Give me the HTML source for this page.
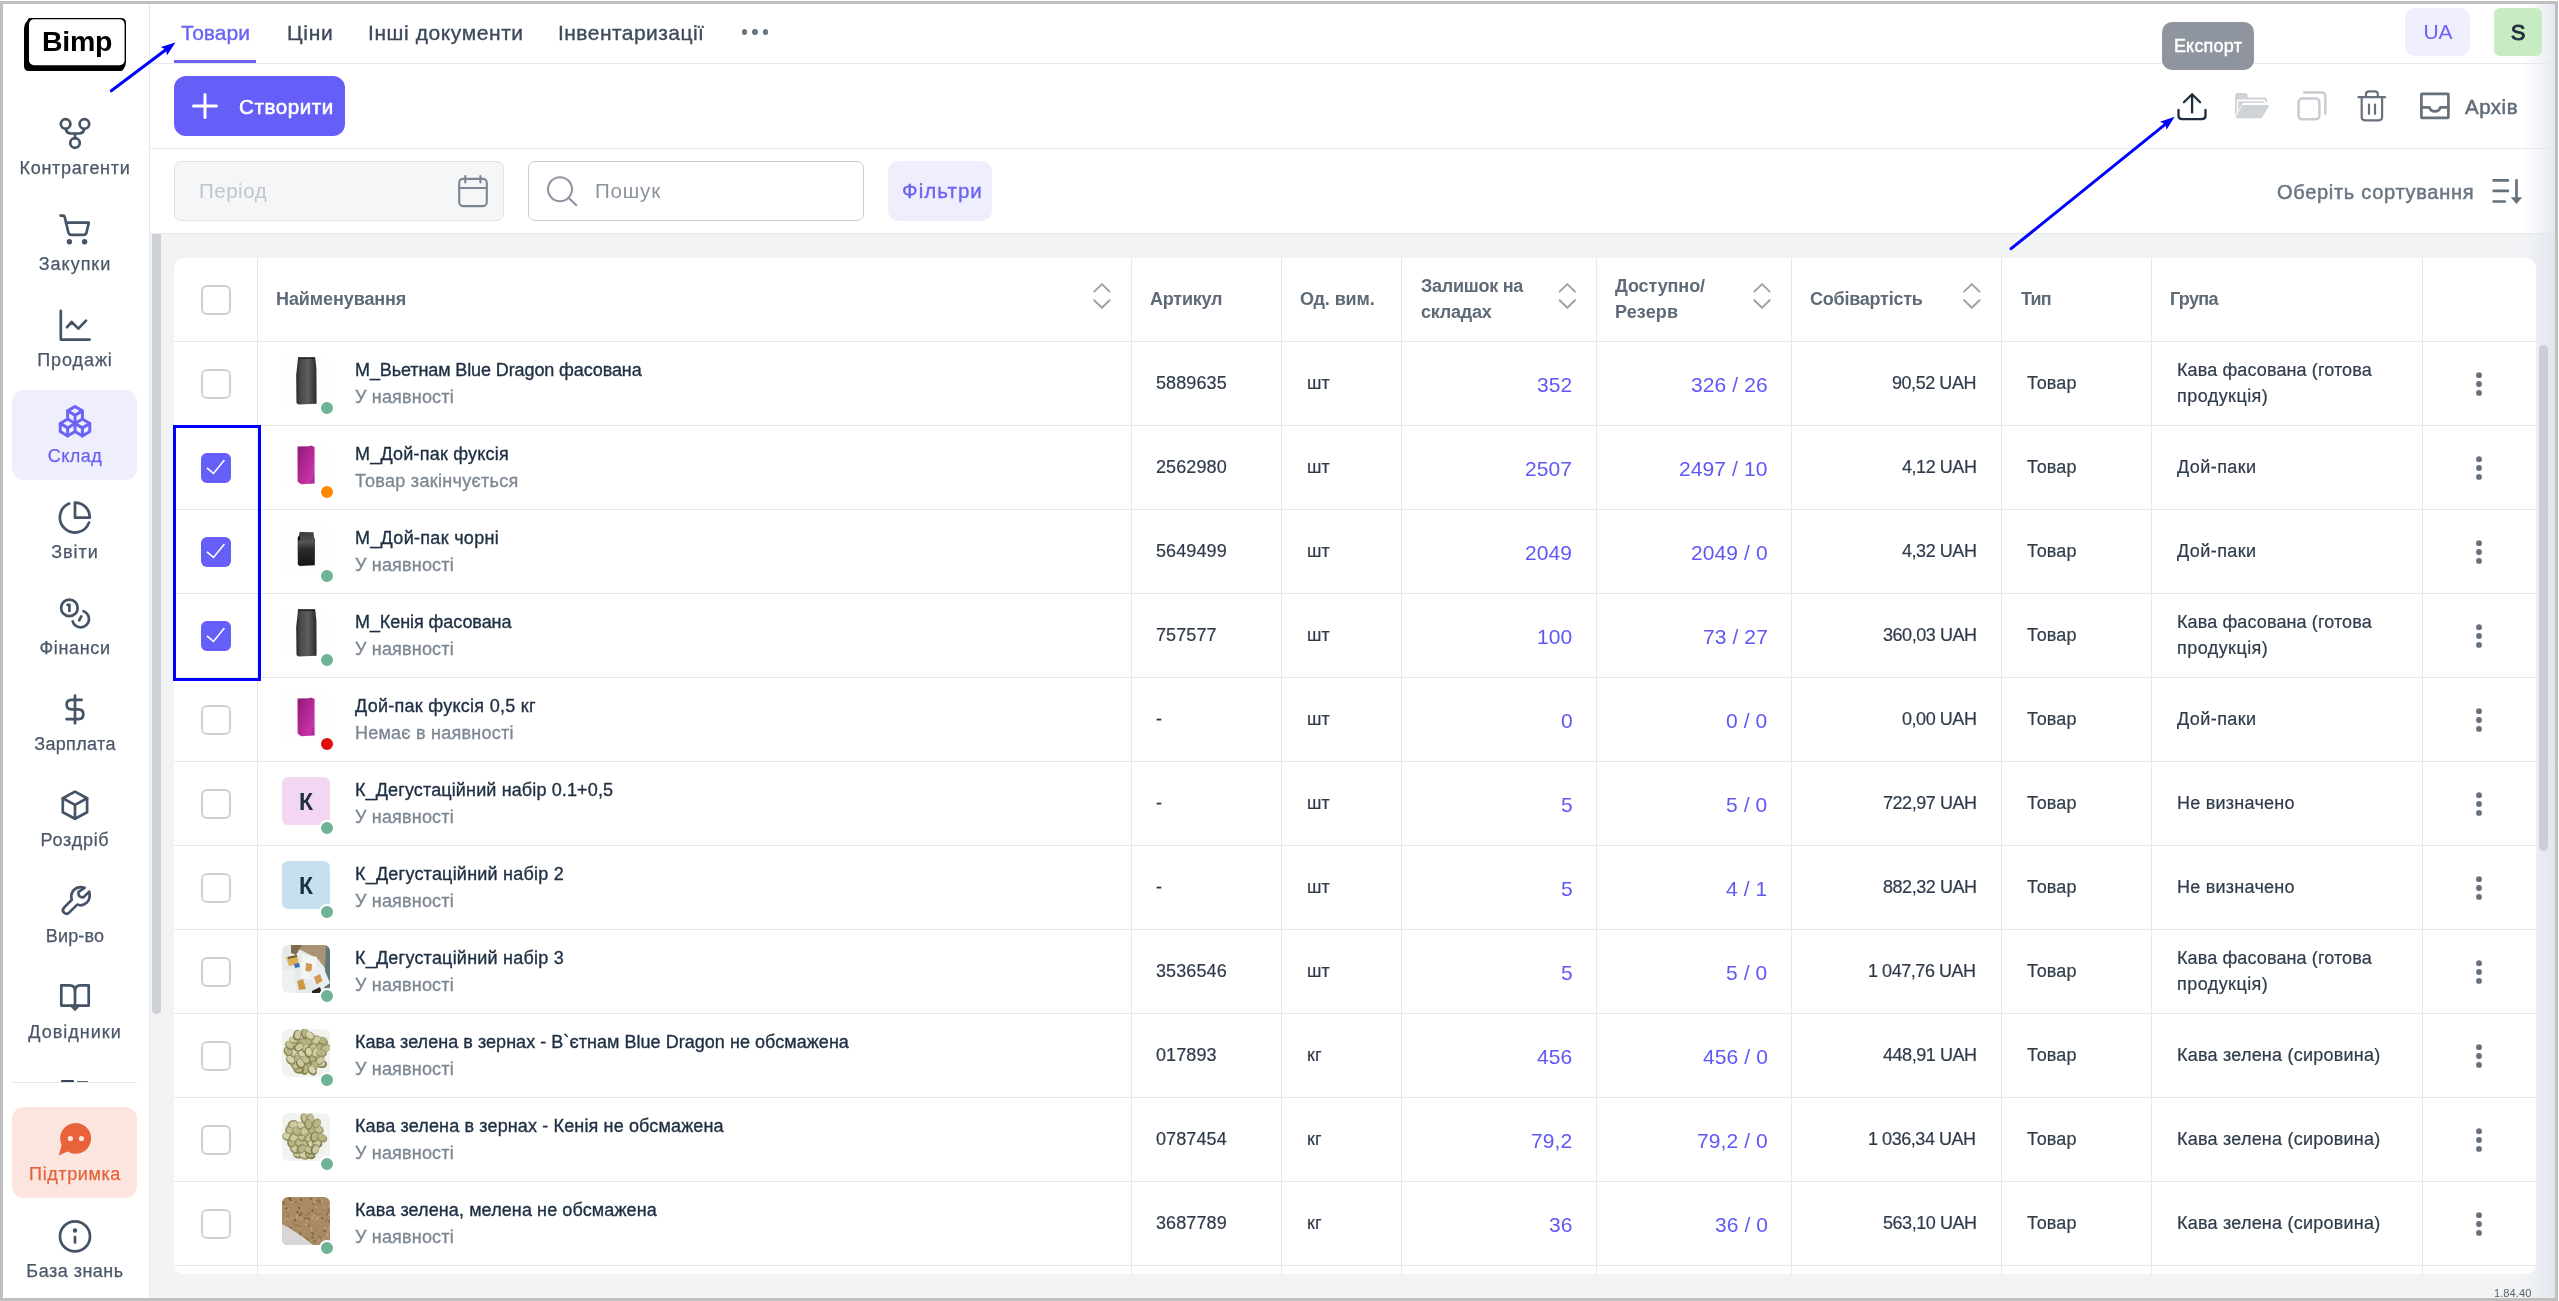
<!DOCTYPE html><html><head><meta charset="utf-8"><title>Bimp</title><style>
html,body{margin:0;padding:0;}
body{width:2559px;height:1301px;overflow:hidden;background:#fff;font-family:"Liberation Sans",sans-serif;position:relative;}
.t{position:absolute;line-height:1;white-space:nowrap;will-change:transform;}
.b{position:absolute;box-sizing:border-box;}
svg{position:absolute;overflow:visible;}
.ic{fill:none;stroke-linecap:round;stroke-linejoin:round;}
</style></head><body>
<div class="b" style="left:150px;top:234px;width:2405px;height:1064px;background:#f2f3f5"></div>
<div class="b" style="left:2522px;top:4px;width:33px;height:1294px;background:linear-gradient(90deg,rgba(220,225,236,0) 0%,rgba(220,225,236,0.25) 40%,rgba(220,225,236,0.75) 100%)"></div>
<div class="b" style="left:150px;top:63px;width:2405px;height:1px;background:#e6e8eb"></div>
<div class="b" style="left:150px;top:148px;width:2405px;height:1px;background:#e6e8eb"></div>
<div class="b" style="left:150px;top:233px;width:2405px;height:1px;background:#e6e8eb"></div>
<div class="b" style="left:149px;top:4px;width:1px;height:1294px;background:#e6e8eb"></div>
<div class="b" style="left:152px;top:234px;width:9px;height:780px;background:#cdd0d5;border-radius:0 0 4.5px 4.5px"></div>
<svg style="left:0;top:0" width="200" height="100" viewBox="0 0 200 100">
<path d="M29 18 H121 Q126 18 126 23 V62 Q126 66 123 70 L121 71 H29 Q24 71 24 66 V28 Q24 24 27 21 Z" fill="#000"/>
<rect x="29" y="19.2" width="95.6" height="46" rx="5" fill="#fff"/>
</svg>
<div class="t " style="left:41.5px;top:26.87px;font-size:28.5px;color:#000;font-weight:700;letter-spacing:-0.3px;">Bimp</div>
<div class="b" style="left:12px;top:390px;width:125px;height:90px;background:#efeefd;border-radius:12px"></div>
<div class="b" style="left:12px;top:1107px;width:125px;height:91px;background:#fde5df;border-radius:12px"></div>
<div class="b" style="left:61px;top:1080px;width:12.6px;height:2px;background:#34445a;border-radius:1px 1px 0 0"></div>
<div class="b" style="left:77px;top:1081px;width:11.4px;height:1px;background:#5a6778"></div>
<div class="b" style="left:12px;top:1082px;width:125px;height:1px;background:#e3e5e9"></div>
<div class="t " style="left:-225.14px;width:600px;text-align:center;top:158.76px;font-size:18px;color:#4b5768;font-weight:400;letter-spacing:0.720px;-webkit-text-stroke:0.25px #4b5768;">Контрагенти</div>
<div class="t " style="left:-225.01px;width:600px;text-align:center;top:254.76px;font-size:18px;color:#4b5768;font-weight:400;letter-spacing:0.983px;-webkit-text-stroke:0.25px #4b5768;">Закупки</div>
<div class="t " style="left:-225.04px;width:600px;text-align:center;top:350.76px;font-size:18px;color:#4b5768;font-weight:400;letter-spacing:0.917px;-webkit-text-stroke:0.25px #4b5768;">Продажі</div>
<div class="t " style="left:-225.26px;width:600px;text-align:center;top:446.76px;font-size:18px;color:#6a63f3;font-weight:400;letter-spacing:0.475px;-webkit-text-stroke:0.25px #6a63f3;">Склад</div>
<div class="t " style="left:-225.03px;width:600px;text-align:center;top:542.76px;font-size:18px;color:#4b5768;font-weight:400;letter-spacing:0.950px;-webkit-text-stroke:0.25px #4b5768;">Звіти</div>
<div class="t " style="left:-225.18px;width:600px;text-align:center;top:638.76px;font-size:18px;color:#4b5768;font-weight:400;letter-spacing:0.650px;-webkit-text-stroke:0.25px #4b5768;">Фінанси</div>
<div class="t " style="left:-225.32px;width:600px;text-align:center;top:734.76px;font-size:18px;color:#4b5768;font-weight:400;letter-spacing:0.357px;-webkit-text-stroke:0.25px #4b5768;">Зарплата</div>
<div class="t " style="left:-225.13px;width:600px;text-align:center;top:830.76px;font-size:18px;color:#4b5768;font-weight:400;letter-spacing:0.733px;-webkit-text-stroke:0.25px #4b5768;">Роздріб</div>
<div class="t " style="left:-225.41px;width:600px;text-align:center;top:926.76px;font-size:18px;color:#4b5768;font-weight:400;letter-spacing:0.180px;-webkit-text-stroke:0.25px #4b5768;">Вир-во</div>
<div class="t " style="left:-224.99px;width:600px;text-align:center;top:1022.76px;font-size:18px;color:#4b5768;font-weight:400;letter-spacing:1.012px;-webkit-text-stroke:0.25px #4b5768;">Довідники</div>
<div class="t " style="left:-225.20px;width:600px;text-align:center;top:1164.76px;font-size:18px;color:#e4623a;font-weight:400;letter-spacing:0.600px;-webkit-text-stroke:0.25px #e4623a;">Підтримка</div>
<div class="t " style="left:-225.26px;width:600px;text-align:center;top:1261.76px;font-size:18px;color:#4b5768;font-weight:400;letter-spacing:0.489px;-webkit-text-stroke:0.25px #4b5768;">База знань</div>
<svg style="left:0;top:0" width="150" height="1301" viewBox="0 0 150 1301">
<g class="ic" stroke="#455366" stroke-width="2.7">
 <!-- git fork -->
 <circle cx="65.6" cy="124" r="4.8"/><circle cx="84.4" cy="124" r="4.8"/><circle cx="75" cy="143" r="4.8"/>
 <path d="M65.8 128.8 Q66.5 133.5 71 133.5 H79 Q83.5 133.5 84.2 128.8 M75 133.5 V138.2"/>
 <!-- cart -->
 <path d="M60.6 215.6 H63 Q64.4 215.6 64.7 217 L68.4 232.5 Q69 234.8 71.5 234.8 H83.5 Q86 234.8 86.5 232.5 L88.8 222.7 H65.8"/>
 <circle cx="69.4" cy="241.7" r="1.9" fill="#455366" stroke-width="1.6"/><circle cx="84.6" cy="241.7" r="1.9" fill="#455366" stroke-width="1.6"/>
 <!-- chart line -->
 <path d="M60.8 310.8 V339.6 H89.6"/>
 <path d="M67 327.2 L71.7 322 L78.3 328.6 L86 320.6"/>
 <!-- Звіти pie -->
 <path d="M69.2 503.6 A15 15 0 1 0 89 522.6"/>
 <path d="M75 502.6 V517.7 H89.8 A14.8 14.8 0 0 0 75 502.6 Z"/>
 <!-- coins -->
 <circle cx="69.4" cy="607.9" r="8.3"/>
 <path d="M67.6 604.9 H69.4 V611"/>
 <path d="M83.5 611.2 A8.3 8.3 0 1 1 72.7 621.4"/>
 <path d="M81.3 616.4 L79.2 620.3"/>
 <!-- dollar -->
 <path d="M75 695.6 V723.3"/>
 <path d="M81.7 699.8 H71.5 Q66.6 699.8 66.6 704.6 Q66.6 709.4 71.5 709.4 H78.5 Q83.3 709.4 83.3 714.3 Q83.3 719.2 78.5 719.2 H66.6"/>
 <!-- box -->
 <path d="M75 791.6 L87.1 798.3 V812.3 L75 818.8 L62.8 812.3 V798.3 Z"/>
 <path d="M62.8 798.3 L75 804.9 L87.1 798.3 M75 804.9 V818.6"/>
 <!-- wrench -->
 <path d="M84.6 887.8 Q78 885.6 73.8 890 Q70 894.2 71.8 899.8 L64 907.6 Q61.6 910.5 64.2 912.8 Q66.8 915 69.4 912.4 L77.2 904.6 Q82.6 906.6 86.8 902.6 Q91 898.4 89.2 891.6 L83.4 897.4 Q80.8 897.6 79.2 896 Q77.8 894.2 78.6 891.8 Z"/>
 <!-- book -->
 <path d="M75 1005.6 H61.3 V985.3 H69.6 Q75 985.3 75 990.6 V1005.6"/>
 <path d="M75 990.6 Q75 985.3 80.3 985.3 H88.7 V1005.6 H75"/>
 <path d="M71.6 1005.8 L75 1009.4 L78.4 1005.8" stroke-linejoin="miter"/>
 <!-- info -->
 <circle cx="75" cy="1236.4" r="15"/>
 <path d="M75 1237 V1242.5"/>
 <circle cx="75" cy="1230.5" r="0.9" fill="#455366"/>
</g>
<g class="ic" stroke="#6a63f3" stroke-width="2" transform="translate(57.3 403.5) scale(1.477)">
 <path d="M7 16.5l-5 -3l5 -3l5 3v5.5l-5 3z"/><path d="M2 13.5v5.5l5 3"/><path d="M7 16.545l5 -3.03"/>
 <path d="M17 16.5l-5 -3l5 -3l5 3v5.5l-5 3z"/><path d="M12 19l5 3"/><path d="M17 16.5l5 -3"/>
 <path d="M12 13.5v-5.5l-5 -3l5 -3l5 3v5.5"/><path d="M7 5.03v5.455"/><path d="M12 8l5 -3"/>
</g>
<g fill="#e8633b">
 <path d="M76 1123 A15.4 15.4 0 1 1 67.5 1151.4 L58.7 1155.4 L61.6 1145 A15.4 15.4 0 0 1 76 1123 Z"/>
</g>
<circle cx="70.4" cy="1138.5" r="2.6" fill="#fde5df"/><circle cx="81.5" cy="1138.5" r="2.6" fill="#fde5df"/>
</svg>
<div class="t " style="left:181px;top:21.52px;font-size:21px;color:#6a63f3;font-weight:400;letter-spacing:0.000px;-webkit-text-stroke:0.35px #6a63f3;">Товари</div>
<div class="t " style="left:286.8px;top:21.52px;font-size:21px;color:#3d4a5b;font-weight:400;letter-spacing:0.733px;-webkit-text-stroke:0.35px #3d4a5b;">Ціни</div>
<div class="t " style="left:368.4px;top:21.52px;font-size:21px;color:#3d4a5b;font-weight:400;letter-spacing:0.585px;-webkit-text-stroke:0.35px #3d4a5b;">Інші документи</div>
<div class="t " style="left:557.7px;top:21.52px;font-size:21px;color:#3d4a5b;font-weight:400;letter-spacing:0.462px;-webkit-text-stroke:0.35px #3d4a5b;">Інвентаризації</div>
<div class="b" style="left:174px;top:60px;width:82px;height:3px;background:#6a63f3"></div>
<div class="b" style="left:741.6px;top:28.9px;width:5.8px;height:5.8px;border-radius:50%;background:#6b7582"></div>
<div class="b" style="left:752.1px;top:28.9px;width:5.8px;height:5.8px;border-radius:50%;background:#6b7582"></div>
<div class="b" style="left:762.6px;top:28.9px;width:5.8px;height:5.8px;border-radius:50%;background:#6b7582"></div>
<div class="b" style="left:2405px;top:8px;width:65px;height:48px;background:#efeefd;border-radius:10px"></div>
<div class="t " style="left:2137.50px;width:600px;text-align:center;top:21.02px;font-size:21px;color:#6a63f3;font-weight:400;">UA</div>
<div class="b" style="left:2494px;top:8px;width:48px;height:48px;background:#c8ecc1;border-radius:6px"></div>
<div class="t " style="left:2218.00px;width:600px;text-align:center;top:22.18px;font-size:22px;color:#1e2d3f;font-weight:400;-webkit-text-stroke:0.9px #1e2d3f;">S</div>
<div class="b" style="left:174px;top:76px;width:171px;height:60px;background:#655ef7;border-radius:12px"></div>
<div class="t " style="left:238.8px;top:96.65px;font-size:20.5px;color:#fff;font-weight:400;letter-spacing:0.600px;-webkit-text-stroke:0.6px #fff;">Створити</div>
<svg style="left:0;top:0" width="400" height="150"><path d="M205 94.5 V117.5 M193.5 106 H216.5" stroke="#fff" stroke-width="3" stroke-linecap="round"/></svg>
<div class="b" style="left:2162px;top:22px;width:92px;height:48px;background:#8e959f;border-radius:10px"></div>
<div class="t " style="left:1908.11px;width:600px;text-align:center;top:36.76px;font-size:18px;color:#fff;font-weight:400;letter-spacing:0.217px;-webkit-text-stroke:0.5px #fff;">Експорт</div>
<div class="t " style="left:2465px;top:96.65px;font-size:20.5px;color:#606b78;font-weight:400;letter-spacing:0.500px;-webkit-text-stroke:0.5px #606b78;">Архів</div>
<svg style="left:0;top:0" width="2559" height="240">
<g class="ic" stroke="#1e2d3d" stroke-width="2.3">
 <path d="M2183.9 102.3 L2192.1 94.2 L2200.1 102.3 M2192.1 94.4 V112.4"/>
 <path d="M2178.5 110 V115.6 Q2178.5 119.2 2182.1 119.2 H2201.9 Q2205.5 119.2 2205.5 115.6 V110"/>
</g>
<g fill="#cfd2d7">
 <path d="M2235 95.5 Q2235 93 2237.5 93 H2245 Q2247.6 93 2247.6 95.5 V97.5 H2264.5 Q2267 97.5 2267 100 V102.6 H2265.6 V101 Q2265.6 99.4 2264 99.4 H2238.6 Q2236.8 99.4 2236.8 101.2 V112.5 L2235 115.7 Z"/>
 <path d="M2238.2 101.3 H2264.2 V102.7 H2243 L2238.2 110.8 Z"/>
 <path d="M2243.3 105.1 H2267.6 Q2269.6 105.1 2268.7 106.8 L2262.3 117 Q2261.6 118.3 2260 118.3 H2237 Q2235 118.3 2236 116.6 L2241.5 106.4 Q2242.1 105.1 2243.3 105.1 Z"/>
</g>
<g class="ic" stroke="#c9cdd2" stroke-width="2.5">
 <rect x="2298.6" y="98.5" width="20.8" height="20.8" rx="3.5"/>
 <path d="M2304.1 92.6 H2321.5 Q2325.3 92.6 2325.3 96.4 V113.8"/>
</g>
<g class="ic" stroke="#66717d" stroke-width="2.2">
 <path d="M2358.5 97.2 H2385"/>
 <path d="M2366 96.8 V94.3 Q2366 91.4 2368.9 91.4 H2374.9 Q2377.8 91.4 2377.8 94.3 V96.8"/>
 <path d="M2361.7 97.5 V117 Q2361.7 120.3 2365 120.3 H2378.8 Q2382.1 120.3 2382.1 117 V97.5"/>
 <path d="M2369 104.5 V113.8 M2375 104.5 V113.8"/>
</g>
<g class="ic" stroke="#66717d" stroke-width="2.7" stroke-linejoin="miter" stroke-linecap="butt">
 <rect x="2421.4" y="93.9" width="27" height="24" rx="0.6"/>
 <path d="M2421.4 107.3 H2429.4 Q2430.6 111.3 2434.9 111.3 Q2439.2 111.3 2440.4 107.3 H2448.4"/>
</g>
</svg>
<div class="b" style="left:174px;top:161px;width:330px;height:60px;background:#f5f6f7;border:1px solid #dfe2e6;border-radius:7px"></div>
<div class="t " style="left:199px;top:180.65px;font-size:20.5px;color:#c1c5cb;font-weight:400;letter-spacing:0.520px;">Період</div>
<div class="b" style="left:528px;top:161px;width:336px;height:60px;background:#fff;border:1px solid #c9cdd3;border-radius:7px"></div>
<div class="t " style="left:595px;top:180.65px;font-size:20.5px;color:#8b939d;font-weight:400;letter-spacing:0.825px;">Пошук</div>
<div class="b" style="left:888px;top:161px;width:104px;height:60px;background:#efeefd;border-radius:10px"></div>
<div class="t " style="left:901.5px;top:181.15px;font-size:20.5px;color:#6a63f3;font-weight:400;letter-spacing:1.067px;-webkit-text-stroke:0.35px #6a63f3;">Фільтри</div>
<div class="t " style="left:2277px;top:182.07px;font-size:20px;color:#6b7683;font-weight:400;letter-spacing:0.706px;-webkit-text-stroke:0.5px #6b7683;">Оберіть сортування</div>
<svg style="left:0;top:0" width="2559" height="240">
<g class="ic" stroke="#7c8793" stroke-width="2.1">
 <rect x="459.2" y="178.9" width="27.6" height="27.2" rx="3.8"/>
 <path d="M465.3 176 V182.4 M480.4 176 V182.4 M459.2 188 H486.8"/>
</g>
<g class="ic" stroke="#8c95a0" stroke-width="2.1">
 <circle cx="560" cy="189.3" r="12"/>
 <path d="M568.8 197.9 L576.3 205.2"/>
</g>
<g stroke="#66717d" stroke-width="2.7" fill="none">
 <path d="M2492.5 180.4 H2508.9 M2492.5 190.9 H2508.9 M2492.5 201.5 H2505.8 M2516.5 179.2 V198"/>
</g>
<path d="M2510.8 197.2 H2522.2 L2516.5 204 Z" fill="#66717d"/>
</svg>
<div class="b" style="left:174px;top:258px;width:2362px;height:1016px;background:#fff;border-radius:10px"></div>
<div class="b" style="left:257px;top:258px;width:1px;height:1016px;background:#e6e8eb"></div>
<div class="b" style="left:1131px;top:258px;width:1px;height:1016px;background:#e6e8eb"></div>
<div class="b" style="left:1281px;top:258px;width:1px;height:1016px;background:#e6e8eb"></div>
<div class="b" style="left:1401px;top:258px;width:1px;height:1016px;background:#e6e8eb"></div>
<div class="b" style="left:1596px;top:258px;width:1px;height:1016px;background:#e6e8eb"></div>
<div class="b" style="left:1791px;top:258px;width:1px;height:1016px;background:#e6e8eb"></div>
<div class="b" style="left:2001px;top:258px;width:1px;height:1016px;background:#e6e8eb"></div>
<div class="b" style="left:2151px;top:258px;width:1px;height:1016px;background:#e6e8eb"></div>
<div class="b" style="left:2422px;top:258px;width:1px;height:1016px;background:#e6e8eb"></div>
<div class="b" style="left:174px;top:341px;width:2362px;height:1px;background:#e6e8eb"></div>
<div class="b" style="left:174px;top:425px;width:2362px;height:1px;background:#e6e8eb"></div>
<div class="b" style="left:174px;top:509px;width:2362px;height:1px;background:#e6e8eb"></div>
<div class="b" style="left:174px;top:593px;width:2362px;height:1px;background:#e6e8eb"></div>
<div class="b" style="left:174px;top:677px;width:2362px;height:1px;background:#e6e8eb"></div>
<div class="b" style="left:174px;top:761px;width:2362px;height:1px;background:#e6e8eb"></div>
<div class="b" style="left:174px;top:845px;width:2362px;height:1px;background:#e6e8eb"></div>
<div class="b" style="left:174px;top:929px;width:2362px;height:1px;background:#e6e8eb"></div>
<div class="b" style="left:174px;top:1013px;width:2362px;height:1px;background:#e6e8eb"></div>
<div class="b" style="left:174px;top:1097px;width:2362px;height:1px;background:#e6e8eb"></div>
<div class="b" style="left:174px;top:1181px;width:2362px;height:1px;background:#e6e8eb"></div>
<div class="b" style="left:174px;top:1265px;width:2362px;height:1px;background:#e6e8eb"></div>
<div class="b" style="left:201px;top:285px;width:30px;height:30px;border:2px solid #cdd1d6;border-radius:6px;background:#fff"></div>
<div class="t " style="left:276px;top:289.96px;font-size:18px;color:#5e6a77;font-weight:700;letter-spacing:-0.091px;">Найменування</div>
<div class="t " style="left:1150px;top:289.96px;font-size:18px;color:#5e6a77;font-weight:700;letter-spacing:-0.217px;">Артикул</div>
<div class="t " style="left:1300px;top:289.96px;font-size:18px;color:#5e6a77;font-weight:700;letter-spacing:-0.086px;">Од. вим.</div>
<div class="t " style="left:1810px;top:289.96px;font-size:18px;color:#5e6a77;font-weight:700;letter-spacing:-0.227px;">Собівартість</div>
<div class="t " style="left:2020.5px;top:289.96px;font-size:18px;color:#5e6a77;font-weight:700;letter-spacing:-0.800px;">Тип</div>
<div class="t " style="left:2170px;top:289.96px;font-size:18px;color:#5e6a77;font-weight:700;letter-spacing:-0.650px;">Група</div>
<div class="t " style="left:1420.6px;top:276.76px;font-size:18px;color:#5e6a77;font-weight:700;letter-spacing:-0.256px;">Залишок на</div>
<div class="t " style="left:1420.6px;top:303.36px;font-size:18px;color:#5e6a77;font-weight:700;letter-spacing:-0.233px;">складах</div>
<div class="t " style="left:1615px;top:276.76px;font-size:18px;color:#5e6a77;font-weight:700;letter-spacing:-0.100px;">Доступно/</div>
<div class="t " style="left:1615px;top:303.36px;font-size:18px;color:#5e6a77;font-weight:700;letter-spacing:0.120px;">Резерв</div>
<svg style="left:0;top:0" width="2559" height="400"><g class="ic" stroke="#9aa3ad" stroke-width="2"><path d="M1094.2 291.6 L1101.9 284.1 L1109.6000000000001 291.6 M1094.2 300.2 L1101.9 307.8 L1109.6000000000001 300.2"/><path d="M1559.6 291.6 L1567.3 284.1 L1575.0 291.6 M1559.6 300.2 L1567.3 307.8 L1575.0 300.2"/><path d="M1754.3 291.6 L1762 284.1 L1769.7 291.6 M1754.3 300.2 L1762 307.8 L1769.7 300.2"/><path d="M1964.1 291.6 L1971.8 284.1 L1979.5 291.6 M1964.1 300.2 L1971.8 307.8 L1979.5 300.2"/></g></svg>
<div class="b" style="left:201px;top:369px;width:30px;height:30px;border:2px solid #cdd1d6;border-radius:6px;background:#fff"></div>
<div class="b" style="left:282px;top:357px;width:48px;height:48px;border-radius:6px;overflow:hidden;background:#fefefe"><svg style="left:0;top:0;filter:blur(0.45px)" width="48" height="48"><defs><linearGradient id="bg1" x1="0" x2="1"><stop offset="0" stop-color="#262626"/><stop offset="0.2" stop-color="#4a4848"/><stop offset="0.6" stop-color="#5e5c5c"/><stop offset="1" stop-color="#2a2828"/></linearGradient></defs><path d="M16 0.3 L33 0.3 L33.6 3.5 L34.4 12 L34.6 46.8 L16.5 47.6 L14.5 46 L14.2 18 L15.5 6 Z" fill="url(#bg1)"/><path d="M16 1.2 H33" stroke="#1c1c1c" stroke-width="1.4"/></svg></div>
<div class="b" style="left:319px;top:400px;width:16px;height:16px;border-radius:50%;background:#6cb494;border:2px solid #fff"></div>
<div class="t " style="left:354.6px;top:360.76px;font-size:18px;color:#1f2f43;font-weight:400;letter-spacing:-0.107px;-webkit-text-stroke:0.35px #1f2f43;">М_Вьетнам Blue Dragon фасована</div>
<div class="t " style="left:354.6px;top:387.76px;font-size:18px;color:#7b8692;font-weight:400;letter-spacing:0.180px;-webkit-text-stroke:0.3px #7b8692;">У наявності</div>
<div class="t " style="left:1156px;top:373.76px;font-size:18px;color:#2f3b4b;font-weight:400;letter-spacing:0.1px;-webkit-text-stroke:0.2px #2f3b4b;">5889635</div>
<div class="t " style="left:1306.5px;top:373.76px;font-size:18px;color:#2f3b4b;font-weight:400;-webkit-text-stroke:0.2px #2f3b4b;">шт</div>
<div class="t " style="right:986.40px;top:374.22px;font-size:21px;color:#5f58f5;font-weight:400;letter-spacing:0.1px;">352</div>
<div class="t " style="right:791.30px;top:374.22px;font-size:21px;color:#5f58f5;font-weight:400;letter-spacing:0.1px;">326 / 26</div>
<div class="t " style="right:582.95px;top:373.76px;font-size:18px;color:#2f3b4b;font-weight:400;letter-spacing:-0.45px;-webkit-text-stroke:0.2px #2f3b4b;">90,52 UAH</div>
<div class="t " style="left:2026.9px;top:373.76px;font-size:18px;color:#2f3b4b;font-weight:400;letter-spacing:0.125px;-webkit-text-stroke:0.2px #2f3b4b;">Товар</div>
<div class="t " style="left:2176.6px;top:360.76px;font-size:18px;color:#2f3b4b;font-weight:400;letter-spacing:0.115px;-webkit-text-stroke:0.2px #2f3b4b;">Кава фасована (готова</div>
<div class="t " style="left:2176.6px;top:387.26px;font-size:18px;color:#2f3b4b;font-weight:400;letter-spacing:0.444px;-webkit-text-stroke:0.2px #2f3b4b;">продукція)</div>
<div class="b" style="left:201px;top:453px;width:30px;height:30px;border-radius:6px;background:#655ef7"></div>
<div class="b" style="left:282px;top:441px;width:48px;height:48px;border-radius:6px;overflow:hidden;background:#fefefe"><svg style="left:0;top:0;filter:blur(0.5px)" width="48" height="48"><defs><linearGradient id="pk" x1="0" x2="1" y1="0" y2="1"><stop offset="0" stop-color="#8e1876"/><stop offset="0.55" stop-color="#b82a98"/><stop offset="0.8" stop-color="#c535a6"/><stop offset="1" stop-color="#9c2385"/></linearGradient></defs><path d="M15.5 5.6 L27 5.2 L29 4.6 L32.6 6 L32.6 42.4 L19 43.2 L15.6 40.5 Z" fill="url(#pk)"/></svg></div>
<div class="b" style="left:319px;top:484px;width:16px;height:16px;border-radius:50%;background:#ff8a00;border:2px solid #fff"></div>
<div class="t " style="left:354.6px;top:444.76px;font-size:18px;color:#1f2f43;font-weight:400;letter-spacing:0.213px;-webkit-text-stroke:0.35px #1f2f43;">М_Дой-пак фуксія</div>
<div class="t " style="left:354.6px;top:471.76px;font-size:18px;color:#7b8692;font-weight:400;letter-spacing:0.312px;-webkit-text-stroke:0.3px #7b8692;">Товар закінчується</div>
<div class="t " style="left:1156px;top:457.76px;font-size:18px;color:#2f3b4b;font-weight:400;letter-spacing:0.1px;-webkit-text-stroke:0.2px #2f3b4b;">2562980</div>
<div class="t " style="left:1306.5px;top:457.76px;font-size:18px;color:#2f3b4b;font-weight:400;-webkit-text-stroke:0.2px #2f3b4b;">шт</div>
<div class="t " style="right:986.40px;top:458.22px;font-size:21px;color:#5f58f5;font-weight:400;letter-spacing:0.1px;">2507</div>
<div class="t " style="right:791.30px;top:458.22px;font-size:21px;color:#5f58f5;font-weight:400;letter-spacing:0.1px;">2497 / 10</div>
<div class="t " style="right:582.95px;top:457.76px;font-size:18px;color:#2f3b4b;font-weight:400;letter-spacing:-0.45px;-webkit-text-stroke:0.2px #2f3b4b;">4,12 UAH</div>
<div class="t " style="left:2026.9px;top:457.76px;font-size:18px;color:#2f3b4b;font-weight:400;letter-spacing:0.125px;-webkit-text-stroke:0.2px #2f3b4b;">Товар</div>
<div class="t " style="left:2176.6px;top:457.76px;font-size:18px;color:#2f3b4b;font-weight:400;letter-spacing:0.429px;-webkit-text-stroke:0.2px #2f3b4b;">Дой-паки</div>
<div class="b" style="left:201px;top:537px;width:30px;height:30px;border-radius:6px;background:#655ef7"></div>
<div class="b" style="left:282px;top:525px;width:48px;height:48px;border-radius:6px;overflow:hidden;background:#fefefe"><svg style="left:0;top:0;filter:blur(0.45px)" width="48" height="48"><defs><linearGradient id="bg2" x1="0" x2="0" y1="0" y2="1"><stop offset="0" stop-color="#3a3a3a"/><stop offset="0.3" stop-color="#555"/><stop offset="0.5" stop-color="#2c2c2c"/><stop offset="1" stop-color="#151515"/></linearGradient></defs><path d="M17.5 7 L31.5 7.3 L32 12 L33 14.5 L32.8 40.2 L17.8 41 L15.8 39.5 L15.6 15 L17 11.5 Z" fill="url(#bg2)"/><path d="M15.8 12.5 L17.5 10 L18 15 L16 15.5 Z" fill="#050505"/></svg></div>
<div class="b" style="left:319px;top:568px;width:16px;height:16px;border-radius:50%;background:#6cb494;border:2px solid #fff"></div>
<div class="t " style="left:354.6px;top:528.76px;font-size:18px;color:#1f2f43;font-weight:400;letter-spacing:0.307px;-webkit-text-stroke:0.35px #1f2f43;">М_Дой-пак чорні</div>
<div class="t " style="left:354.6px;top:555.76px;font-size:18px;color:#7b8692;font-weight:400;letter-spacing:0.180px;-webkit-text-stroke:0.3px #7b8692;">У наявності</div>
<div class="t " style="left:1156px;top:541.76px;font-size:18px;color:#2f3b4b;font-weight:400;letter-spacing:0.1px;-webkit-text-stroke:0.2px #2f3b4b;">5649499</div>
<div class="t " style="left:1306.5px;top:541.76px;font-size:18px;color:#2f3b4b;font-weight:400;-webkit-text-stroke:0.2px #2f3b4b;">шт</div>
<div class="t " style="right:986.40px;top:542.22px;font-size:21px;color:#5f58f5;font-weight:400;letter-spacing:0.1px;">2049</div>
<div class="t " style="right:791.30px;top:542.22px;font-size:21px;color:#5f58f5;font-weight:400;letter-spacing:0.1px;">2049 / 0</div>
<div class="t " style="right:582.95px;top:541.76px;font-size:18px;color:#2f3b4b;font-weight:400;letter-spacing:-0.45px;-webkit-text-stroke:0.2px #2f3b4b;">4,32 UAH</div>
<div class="t " style="left:2026.9px;top:541.76px;font-size:18px;color:#2f3b4b;font-weight:400;letter-spacing:0.125px;-webkit-text-stroke:0.2px #2f3b4b;">Товар</div>
<div class="t " style="left:2176.6px;top:541.76px;font-size:18px;color:#2f3b4b;font-weight:400;letter-spacing:0.429px;-webkit-text-stroke:0.2px #2f3b4b;">Дой-паки</div>
<div class="b" style="left:201px;top:621px;width:30px;height:30px;border-radius:6px;background:#655ef7"></div>
<div class="b" style="left:282px;top:609px;width:48px;height:48px;border-radius:6px;overflow:hidden;background:#fefefe"><svg style="left:0;top:0;filter:blur(0.45px)" width="48" height="48"><defs><linearGradient id="bg1" x1="0" x2="1"><stop offset="0" stop-color="#262626"/><stop offset="0.2" stop-color="#4a4848"/><stop offset="0.6" stop-color="#5e5c5c"/><stop offset="1" stop-color="#2a2828"/></linearGradient></defs><path d="M16 0.3 L33 0.3 L33.6 3.5 L34.4 12 L34.6 46.8 L16.5 47.6 L14.5 46 L14.2 18 L15.5 6 Z" fill="url(#bg1)"/><path d="M16 1.2 H33" stroke="#1c1c1c" stroke-width="1.4"/></svg></div>
<div class="b" style="left:319px;top:652px;width:16px;height:16px;border-radius:50%;background:#6cb494;border:2px solid #fff"></div>
<div class="t " style="left:354.6px;top:612.76px;font-size:18px;color:#1f2f43;font-weight:400;letter-spacing:-0.073px;-webkit-text-stroke:0.35px #1f2f43;">М_Кенія фасована</div>
<div class="t " style="left:354.6px;top:639.76px;font-size:18px;color:#7b8692;font-weight:400;letter-spacing:0.180px;-webkit-text-stroke:0.3px #7b8692;">У наявності</div>
<div class="t " style="left:1156px;top:625.76px;font-size:18px;color:#2f3b4b;font-weight:400;letter-spacing:0.1px;-webkit-text-stroke:0.2px #2f3b4b;">757577</div>
<div class="t " style="left:1306.5px;top:625.76px;font-size:18px;color:#2f3b4b;font-weight:400;-webkit-text-stroke:0.2px #2f3b4b;">шт</div>
<div class="t " style="right:986.40px;top:626.22px;font-size:21px;color:#5f58f5;font-weight:400;letter-spacing:0.1px;">100</div>
<div class="t " style="right:791.30px;top:626.22px;font-size:21px;color:#5f58f5;font-weight:400;letter-spacing:0.1px;">73 / 27</div>
<div class="t " style="right:582.95px;top:625.76px;font-size:18px;color:#2f3b4b;font-weight:400;letter-spacing:-0.45px;-webkit-text-stroke:0.2px #2f3b4b;">360,03 UAH</div>
<div class="t " style="left:2026.9px;top:625.76px;font-size:18px;color:#2f3b4b;font-weight:400;letter-spacing:0.125px;-webkit-text-stroke:0.2px #2f3b4b;">Товар</div>
<div class="t " style="left:2176.6px;top:612.76px;font-size:18px;color:#2f3b4b;font-weight:400;letter-spacing:0.115px;-webkit-text-stroke:0.2px #2f3b4b;">Кава фасована (готова</div>
<div class="t " style="left:2176.6px;top:639.26px;font-size:18px;color:#2f3b4b;font-weight:400;letter-spacing:0.444px;-webkit-text-stroke:0.2px #2f3b4b;">продукція)</div>
<div class="b" style="left:201px;top:705px;width:30px;height:30px;border:2px solid #cdd1d6;border-radius:6px;background:#fff"></div>
<div class="b" style="left:282px;top:693px;width:48px;height:48px;border-radius:6px;overflow:hidden;background:#fefefe"><svg style="left:0;top:0;filter:blur(0.5px)" width="48" height="48"><defs><linearGradient id="pk" x1="0" x2="1" y1="0" y2="1"><stop offset="0" stop-color="#8e1876"/><stop offset="0.55" stop-color="#b82a98"/><stop offset="0.8" stop-color="#c535a6"/><stop offset="1" stop-color="#9c2385"/></linearGradient></defs><path d="M15.5 5.6 L27 5.2 L29 4.6 L32.6 6 L32.6 42.4 L19 43.2 L15.6 40.5 Z" fill="url(#pk)"/></svg></div>
<div class="b" style="left:319px;top:736px;width:16px;height:16px;border-radius:50%;background:#e10e0e;border:2px solid #fff"></div>
<div class="t " style="left:354.6px;top:696.76px;font-size:18px;color:#1f2f43;font-weight:400;letter-spacing:0.275px;-webkit-text-stroke:0.35px #1f2f43;">Дой-пак фуксія 0,5 кг</div>
<div class="t " style="left:354.6px;top:723.76px;font-size:18px;color:#7b8692;font-weight:400;letter-spacing:0.238px;-webkit-text-stroke:0.3px #7b8692;">Немає в наявності</div>
<div class="t " style="left:1156px;top:709.76px;font-size:18px;color:#2f3b4b;font-weight:400;letter-spacing:0.1px;-webkit-text-stroke:0.2px #2f3b4b;">-</div>
<div class="t " style="left:1306.5px;top:709.76px;font-size:18px;color:#2f3b4b;font-weight:400;-webkit-text-stroke:0.2px #2f3b4b;">шт</div>
<div class="t " style="right:986.40px;top:710.22px;font-size:21px;color:#5f58f5;font-weight:400;letter-spacing:0.1px;">0</div>
<div class="t " style="right:791.30px;top:710.22px;font-size:21px;color:#5f58f5;font-weight:400;letter-spacing:0.1px;">0 / 0</div>
<div class="t " style="right:582.95px;top:709.76px;font-size:18px;color:#2f3b4b;font-weight:400;letter-spacing:-0.45px;-webkit-text-stroke:0.2px #2f3b4b;">0,00 UAH</div>
<div class="t " style="left:2026.9px;top:709.76px;font-size:18px;color:#2f3b4b;font-weight:400;letter-spacing:0.125px;-webkit-text-stroke:0.2px #2f3b4b;">Товар</div>
<div class="t " style="left:2176.6px;top:709.76px;font-size:18px;color:#2f3b4b;font-weight:400;letter-spacing:0.429px;-webkit-text-stroke:0.2px #2f3b4b;">Дой-паки</div>
<div class="b" style="left:201px;top:789px;width:30px;height:30px;border:2px solid #cdd1d6;border-radius:6px;background:#fff"></div>
<div class="b" style="left:282px;top:777px;width:48px;height:48px;border-radius:6px;overflow:hidden;background:#f3d7f2"><div class="t" style="left:0;width:48px;text-align:center;top:13.5px;font-size:23px;font-weight:700;color:#1f2f43">К</div></div>
<div class="b" style="left:319px;top:820px;width:16px;height:16px;border-radius:50%;background:#6cb494;border:2px solid #fff"></div>
<div class="t " style="left:354.6px;top:780.76px;font-size:18px;color:#1f2f43;font-weight:400;letter-spacing:0.132px;-webkit-text-stroke:0.35px #1f2f43;">К_Дегустаційний набір 0.1+0,5</div>
<div class="t " style="left:354.6px;top:807.76px;font-size:18px;color:#7b8692;font-weight:400;letter-spacing:0.180px;-webkit-text-stroke:0.3px #7b8692;">У наявності</div>
<div class="t " style="left:1156px;top:793.76px;font-size:18px;color:#2f3b4b;font-weight:400;letter-spacing:0.1px;-webkit-text-stroke:0.2px #2f3b4b;">-</div>
<div class="t " style="left:1306.5px;top:793.76px;font-size:18px;color:#2f3b4b;font-weight:400;-webkit-text-stroke:0.2px #2f3b4b;">шт</div>
<div class="t " style="right:986.40px;top:794.22px;font-size:21px;color:#5f58f5;font-weight:400;letter-spacing:0.1px;">5</div>
<div class="t " style="right:791.30px;top:794.22px;font-size:21px;color:#5f58f5;font-weight:400;letter-spacing:0.1px;">5 / 0</div>
<div class="t " style="right:582.95px;top:793.76px;font-size:18px;color:#2f3b4b;font-weight:400;letter-spacing:-0.45px;-webkit-text-stroke:0.2px #2f3b4b;">722,97 UAH</div>
<div class="t " style="left:2026.9px;top:793.76px;font-size:18px;color:#2f3b4b;font-weight:400;letter-spacing:0.125px;-webkit-text-stroke:0.2px #2f3b4b;">Товар</div>
<div class="t " style="left:2176.6px;top:793.76px;font-size:18px;color:#2f3b4b;font-weight:400;letter-spacing:0.245px;-webkit-text-stroke:0.2px #2f3b4b;">Не визначено</div>
<div class="b" style="left:201px;top:873px;width:30px;height:30px;border:2px solid #cdd1d6;border-radius:6px;background:#fff"></div>
<div class="b" style="left:282px;top:861px;width:48px;height:48px;border-radius:6px;overflow:hidden;background:#c6e0ef"><div class="t" style="left:0;width:48px;text-align:center;top:13.5px;font-size:23px;font-weight:700;color:#1f2f43">К</div></div>
<div class="b" style="left:319px;top:904px;width:16px;height:16px;border-radius:50%;background:#6cb494;border:2px solid #fff"></div>
<div class="t " style="left:354.6px;top:864.76px;font-size:18px;color:#1f2f43;font-weight:400;letter-spacing:0.223px;-webkit-text-stroke:0.35px #1f2f43;">К_Дегустаційний набір 2</div>
<div class="t " style="left:354.6px;top:891.76px;font-size:18px;color:#7b8692;font-weight:400;letter-spacing:0.180px;-webkit-text-stroke:0.3px #7b8692;">У наявності</div>
<div class="t " style="left:1156px;top:877.76px;font-size:18px;color:#2f3b4b;font-weight:400;letter-spacing:0.1px;-webkit-text-stroke:0.2px #2f3b4b;">-</div>
<div class="t " style="left:1306.5px;top:877.76px;font-size:18px;color:#2f3b4b;font-weight:400;-webkit-text-stroke:0.2px #2f3b4b;">шт</div>
<div class="t " style="right:986.40px;top:878.22px;font-size:21px;color:#5f58f5;font-weight:400;letter-spacing:0.1px;">5</div>
<div class="t " style="right:791.30px;top:878.22px;font-size:21px;color:#5f58f5;font-weight:400;letter-spacing:0.1px;">4 / 1</div>
<div class="t " style="right:582.95px;top:877.76px;font-size:18px;color:#2f3b4b;font-weight:400;letter-spacing:-0.45px;-webkit-text-stroke:0.2px #2f3b4b;">882,32 UAH</div>
<div class="t " style="left:2026.9px;top:877.76px;font-size:18px;color:#2f3b4b;font-weight:400;letter-spacing:0.125px;-webkit-text-stroke:0.2px #2f3b4b;">Товар</div>
<div class="t " style="left:2176.6px;top:877.76px;font-size:18px;color:#2f3b4b;font-weight:400;letter-spacing:0.245px;-webkit-text-stroke:0.2px #2f3b4b;">Не визначено</div>
<div class="b" style="left:201px;top:957px;width:30px;height:30px;border:2px solid #cdd1d6;border-radius:6px;background:#fff"></div>
<div class="b" style="left:282px;top:945px;width:48px;height:48px;border-radius:6px;overflow:hidden;"><svg style="left:0;top:0;filter:blur(0.7px)" width="48" height="48"><rect x="0" y="0" width="48" height="48" fill="#e6eaea"/><path d="M9 0 H48 V30 L36 14 Z" fill="#a89473"/><path d="M9 0 H20 L14 10 L9 8 Z" fill="#7f6a4e"/><path d="M44 0 H48 V48 H42 Z" fill="#5f7776"/><path d="M4 12 L15 10 L17 19 L7 21 Z" fill="#d9b055"/><path d="M6 12 L15 10 L15 12 L6 14 Z" fill="#6e5a33"/><path d="M12 19 L17 18 L18 22 L13 23 Z" fill="#3a6fb8"/><path d="M20 9 L35 12 L33 35 L19 33 Z" fill="#f1f5f3"/><path d="M24 18 L30 19 L29.5 27 L23.5 26 Z" fill="#d39a4c"/><path d="M27 27 L40 19 L48 38 L35 47 Z" fill="#e9eff0"/><path d="M32 32 L38 29 L40.5 36 L34.5 39.5 Z" fill="#d49b50"/><path d="M15 36 L21 34 L24 44 L17 45 Z" fill="#c99a45"/><path d="M0 26 L12 24 L14 48 H0 Z" fill="#eef1f1"/><path d="M30 46 L38 42 L40 48 H30 Z" fill="#2a2320"/></svg></div>
<div class="b" style="left:319px;top:988px;width:16px;height:16px;border-radius:50%;background:#6cb494;border:2px solid #fff"></div>
<div class="t " style="left:354.6px;top:948.76px;font-size:18px;color:#1f2f43;font-weight:400;letter-spacing:0.223px;-webkit-text-stroke:0.35px #1f2f43;">К_Дегустаційний набір 3</div>
<div class="t " style="left:354.6px;top:975.76px;font-size:18px;color:#7b8692;font-weight:400;letter-spacing:0.180px;-webkit-text-stroke:0.3px #7b8692;">У наявності</div>
<div class="t " style="left:1156px;top:961.76px;font-size:18px;color:#2f3b4b;font-weight:400;letter-spacing:0.1px;-webkit-text-stroke:0.2px #2f3b4b;">3536546</div>
<div class="t " style="left:1306.5px;top:961.76px;font-size:18px;color:#2f3b4b;font-weight:400;-webkit-text-stroke:0.2px #2f3b4b;">шт</div>
<div class="t " style="right:986.40px;top:962.22px;font-size:21px;color:#5f58f5;font-weight:400;letter-spacing:0.1px;">5</div>
<div class="t " style="right:791.30px;top:962.22px;font-size:21px;color:#5f58f5;font-weight:400;letter-spacing:0.1px;">5 / 0</div>
<div class="t " style="right:582.95px;top:961.76px;font-size:18px;color:#2f3b4b;font-weight:400;letter-spacing:-0.45px;-webkit-text-stroke:0.2px #2f3b4b;">1 047,76 UAH</div>
<div class="t " style="left:2026.9px;top:961.76px;font-size:18px;color:#2f3b4b;font-weight:400;letter-spacing:0.125px;-webkit-text-stroke:0.2px #2f3b4b;">Товар</div>
<div class="t " style="left:2176.6px;top:948.76px;font-size:18px;color:#2f3b4b;font-weight:400;letter-spacing:0.115px;-webkit-text-stroke:0.2px #2f3b4b;">Кава фасована (готова</div>
<div class="t " style="left:2176.6px;top:975.26px;font-size:18px;color:#2f3b4b;font-weight:400;letter-spacing:0.444px;-webkit-text-stroke:0.2px #2f3b4b;">продукція)</div>
<div class="b" style="left:201px;top:1041px;width:30px;height:30px;border:2px solid #cdd1d6;border-radius:6px;background:#fff"></div>
<div class="b" style="left:282px;top:1029px;width:48px;height:48px;border-radius:6px;overflow:hidden;background:#f1f3ee"><svg style="left:0;top:0;filter:blur(0.5px)" width="48" height="48"><g transform="rotate(169 27.1 37.5)"><ellipse cx="27.1" cy="37.5" rx="5.4" ry="4.1" fill="#98946a"/><ellipse cx="26.5" cy="37.0" rx="4.1" ry="2.9" fill="#b8b583"/></g><g transform="rotate(94 22.8 40.6)"><ellipse cx="22.8" cy="40.6" rx="5.4" ry="4.1" fill="#857f55"/><ellipse cx="22.2" cy="40.1" rx="4.1" ry="2.9" fill="#b8b583"/></g><g transform="rotate(2 26.1 12.7)"><ellipse cx="26.1" cy="12.7" rx="5.4" ry="4.1" fill="#98946a"/><ellipse cx="25.5" cy="12.2" rx="4.1" ry="2.9" fill="#b8b583"/></g><g transform="rotate(4 39.7 35.0)"><ellipse cx="39.7" cy="35.0" rx="5.4" ry="4.1" fill="#857f55"/><ellipse cx="39.1" cy="34.5" rx="4.1" ry="2.9" fill="#cdca9e"/></g><g transform="rotate(11 16.6 40.6)"><ellipse cx="16.6" cy="40.6" rx="5.4" ry="4.1" fill="#857f55"/><ellipse cx="16.0" cy="40.1" rx="4.1" ry="2.9" fill="#b8b583"/></g><g transform="rotate(84 30.0 29.0)"><ellipse cx="30.0" cy="29.0" rx="5.4" ry="4.1" fill="#857f55"/><ellipse cx="29.4" cy="28.5" rx="4.1" ry="2.9" fill="#b8b583"/></g><g transform="rotate(110 10.9 23.2)"><ellipse cx="10.9" cy="23.2" rx="5.4" ry="4.1" fill="#98946a"/><ellipse cx="10.3" cy="22.7" rx="4.1" ry="2.9" fill="#d6d3aa"/></g><g transform="rotate(4 23.6 31.5)"><ellipse cx="23.6" cy="31.5" rx="5.4" ry="4.1" fill="#8d8a5c"/><ellipse cx="23.0" cy="31.0" rx="4.1" ry="2.9" fill="#c3c192"/></g><g transform="rotate(173 20.4 23.8)"><ellipse cx="20.4" cy="23.8" rx="5.4" ry="4.1" fill="#98946a"/><ellipse cx="19.8" cy="23.3" rx="4.1" ry="2.9" fill="#d6d3aa"/></g><g transform="rotate(54 16.0 31.3)"><ellipse cx="16.0" cy="31.3" rx="5.4" ry="4.1" fill="#857f55"/><ellipse cx="15.4" cy="30.8" rx="4.1" ry="2.9" fill="#b8b583"/></g><g transform="rotate(32 40.8 12.3)"><ellipse cx="40.8" cy="12.3" rx="5.4" ry="4.1" fill="#8d8a5c"/><ellipse cx="40.2" cy="11.8" rx="4.1" ry="2.9" fill="#b8b583"/></g><g transform="rotate(136 36.2 18.9)"><ellipse cx="36.2" cy="18.9" rx="5.4" ry="4.1" fill="#857f55"/><ellipse cx="35.6" cy="18.4" rx="4.1" ry="2.9" fill="#b8b583"/></g><g transform="rotate(54 13.0 36.2)"><ellipse cx="13.0" cy="36.2" rx="5.4" ry="4.1" fill="#98946a"/><ellipse cx="12.4" cy="35.7" rx="4.1" ry="2.9" fill="#c3c192"/></g><g transform="rotate(139 37.6 31.4)"><ellipse cx="37.6" cy="31.4" rx="5.4" ry="4.1" fill="#8d8a5c"/><ellipse cx="37.0" cy="30.9" rx="4.1" ry="2.9" fill="#cdca9e"/></g><g transform="rotate(56 6.1 22.8)"><ellipse cx="6.1" cy="22.8" rx="5.4" ry="4.1" fill="#8d8a5c"/><ellipse cx="5.5" cy="22.3" rx="4.1" ry="2.9" fill="#b8b583"/></g><g transform="rotate(43 8.8 31.2)"><ellipse cx="8.8" cy="31.2" rx="5.4" ry="4.1" fill="#8d8a5c"/><ellipse cx="8.2" cy="30.7" rx="4.1" ry="2.9" fill="#d6d3aa"/></g><g transform="rotate(117 30.1 19.3)"><ellipse cx="30.1" cy="19.3" rx="5.4" ry="4.1" fill="#8d8a5c"/><ellipse cx="29.5" cy="18.8" rx="4.1" ry="2.9" fill="#c3c192"/></g><g transform="rotate(108 33.0 23.7)"><ellipse cx="33.0" cy="23.7" rx="5.4" ry="4.1" fill="#98946a"/><ellipse cx="32.4" cy="23.2" rx="4.1" ry="2.9" fill="#cdca9e"/></g><g transform="rotate(79 23.2 19.1)"><ellipse cx="23.2" cy="19.1" rx="5.4" ry="4.1" fill="#8d8a5c"/><ellipse cx="22.6" cy="18.6" rx="4.1" ry="2.9" fill="#c3c192"/></g><g transform="rotate(61 18.4 34.7)"><ellipse cx="18.4" cy="34.7" rx="5.4" ry="4.1" fill="#857f55"/><ellipse cx="17.8" cy="34.2" rx="4.1" ry="2.9" fill="#cdca9e"/></g><g transform="rotate(159 19.4 13.1)"><ellipse cx="19.4" cy="13.1" rx="5.4" ry="4.1" fill="#98946a"/><ellipse cx="18.8" cy="12.6" rx="4.1" ry="2.9" fill="#b8b583"/></g><g transform="rotate(41 7.9 16.6)"><ellipse cx="7.9" cy="16.6" rx="5.4" ry="4.1" fill="#8d8a5c"/><ellipse cx="7.3" cy="16.1" rx="4.1" ry="2.9" fill="#c3c192"/></g><g transform="rotate(95 31.8 36.9)"><ellipse cx="31.8" cy="36.9" rx="5.4" ry="4.1" fill="#8d8a5c"/><ellipse cx="31.2" cy="36.4" rx="4.1" ry="2.9" fill="#b8b583"/></g><g transform="rotate(145 16.6 17.9)"><ellipse cx="16.6" cy="17.9" rx="5.4" ry="4.1" fill="#857f55"/><ellipse cx="16.0" cy="17.4" rx="4.1" ry="2.9" fill="#cdca9e"/></g><g transform="rotate(155 43.3 19.3)"><ellipse cx="43.3" cy="19.3" rx="5.4" ry="4.1" fill="#98946a"/><ellipse cx="42.7" cy="18.8" rx="4.1" ry="2.9" fill="#c3c192"/></g><g transform="rotate(145 33.5 10.7)"><ellipse cx="33.5" cy="10.7" rx="5.4" ry="4.1" fill="#98946a"/><ellipse cx="32.9" cy="10.2" rx="4.1" ry="2.9" fill="#cdca9e"/></g><g transform="rotate(76 22.9 4.7)"><ellipse cx="22.9" cy="4.7" rx="5.4" ry="4.1" fill="#857f55"/><ellipse cx="22.3" cy="4.2" rx="4.1" ry="2.9" fill="#b8b583"/></g><g transform="rotate(84 26.4 23.4)"><ellipse cx="26.4" cy="23.4" rx="5.4" ry="4.1" fill="#857f55"/><ellipse cx="25.8" cy="22.9" rx="4.1" ry="2.9" fill="#d6d3aa"/></g><g transform="rotate(52 30.2 41.5)"><ellipse cx="30.2" cy="41.5" rx="5.4" ry="4.1" fill="#857f55"/><ellipse cx="29.6" cy="41.0" rx="4.1" ry="2.9" fill="#d6d3aa"/></g><g transform="rotate(6 12.4 11.0)"><ellipse cx="12.4" cy="11.0" rx="5.4" ry="4.1" fill="#98946a"/><ellipse cx="11.8" cy="10.5" rx="4.1" ry="2.9" fill="#cdca9e"/></g><g transform="rotate(36 28.0 7.0)"><ellipse cx="28.0" cy="7.0" rx="5.4" ry="4.1" fill="#98946a"/><ellipse cx="27.4" cy="6.5" rx="4.1" ry="2.9" fill="#d6d3aa"/></g><g transform="rotate(101 15.1 6.3)"><ellipse cx="15.1" cy="6.3" rx="5.4" ry="4.1" fill="#857f55"/><ellipse cx="14.5" cy="5.8" rx="4.1" ry="2.9" fill="#cdca9e"/></g><g transform="rotate(6 39.6 24.3)"><ellipse cx="39.6" cy="24.3" rx="5.4" ry="4.1" fill="#98946a"/><ellipse cx="39.0" cy="23.8" rx="4.1" ry="2.9" fill="#b8b583"/></g></svg></div>
<div class="b" style="left:319px;top:1072px;width:16px;height:16px;border-radius:50%;background:#6cb494;border:2px solid #fff"></div>
<div class="t " style="left:354.6px;top:1032.76px;font-size:18px;color:#1f2f43;font-weight:400;letter-spacing:0.041px;-webkit-text-stroke:0.35px #1f2f43;">Кава зелена в зернах - В`єтнам Blue Dragon не обсмажена</div>
<div class="t " style="left:354.6px;top:1059.76px;font-size:18px;color:#7b8692;font-weight:400;letter-spacing:0.180px;-webkit-text-stroke:0.3px #7b8692;">У наявності</div>
<div class="t " style="left:1156px;top:1045.76px;font-size:18px;color:#2f3b4b;font-weight:400;letter-spacing:0.1px;-webkit-text-stroke:0.2px #2f3b4b;">017893</div>
<div class="t " style="left:1306.5px;top:1045.76px;font-size:18px;color:#2f3b4b;font-weight:400;-webkit-text-stroke:0.2px #2f3b4b;">кг</div>
<div class="t " style="right:986.40px;top:1046.22px;font-size:21px;color:#5f58f5;font-weight:400;letter-spacing:0.1px;">456</div>
<div class="t " style="right:791.30px;top:1046.22px;font-size:21px;color:#5f58f5;font-weight:400;letter-spacing:0.1px;">456 / 0</div>
<div class="t " style="right:582.95px;top:1045.76px;font-size:18px;color:#2f3b4b;font-weight:400;letter-spacing:-0.45px;-webkit-text-stroke:0.2px #2f3b4b;">448,91 UAH</div>
<div class="t " style="left:2026.9px;top:1045.76px;font-size:18px;color:#2f3b4b;font-weight:400;letter-spacing:0.125px;-webkit-text-stroke:0.2px #2f3b4b;">Товар</div>
<div class="t " style="left:2176.6px;top:1045.76px;font-size:18px;color:#2f3b4b;font-weight:400;letter-spacing:0.224px;-webkit-text-stroke:0.2px #2f3b4b;">Кава зелена (сировина)</div>
<div class="b" style="left:201px;top:1125px;width:30px;height:30px;border:2px solid #cdd1d6;border-radius:6px;background:#fff"></div>
<div class="b" style="left:282px;top:1113px;width:48px;height:48px;border-radius:6px;overflow:hidden;background:#f1f3ee"><svg style="left:0;top:0;filter:blur(0.5px)" width="48" height="48"><g transform="rotate(2 16.5 41.4)"><ellipse cx="16.5" cy="41.4" rx="5.4" ry="4.1" fill="#857f55"/><ellipse cx="15.9" cy="40.9" rx="4.1" ry="2.9" fill="#cdca9e"/></g><g transform="rotate(47 12.6 36.3)"><ellipse cx="12.6" cy="36.3" rx="5.4" ry="4.1" fill="#8d8a5c"/><ellipse cx="12.0" cy="35.8" rx="4.1" ry="2.9" fill="#cdca9e"/></g><g transform="rotate(75 29.9 17.6)"><ellipse cx="29.9" cy="17.6" rx="5.4" ry="4.1" fill="#98946a"/><ellipse cx="29.3" cy="17.1" rx="4.1" ry="2.9" fill="#b8b583"/></g><g transform="rotate(172 22.3 30.8)"><ellipse cx="22.3" cy="30.8" rx="5.4" ry="4.1" fill="#857f55"/><ellipse cx="21.7" cy="30.3" rx="4.1" ry="2.9" fill="#c3c192"/></g><g transform="rotate(82 28.5 30.0)"><ellipse cx="28.5" cy="30.0" rx="5.4" ry="4.1" fill="#857f55"/><ellipse cx="27.9" cy="29.5" rx="4.1" ry="2.9" fill="#d6d3aa"/></g><g transform="rotate(72 22.6 5.6)"><ellipse cx="22.6" cy="5.6" rx="5.4" ry="4.1" fill="#98946a"/><ellipse cx="22.0" cy="5.1" rx="4.1" ry="2.9" fill="#c3c192"/></g><g transform="rotate(87 28.2 6.0)"><ellipse cx="28.2" cy="6.0" rx="5.4" ry="4.1" fill="#98946a"/><ellipse cx="27.6" cy="5.5" rx="4.1" ry="2.9" fill="#c3c192"/></g><g transform="rotate(34 19.4 13.3)"><ellipse cx="19.4" cy="13.3" rx="5.4" ry="4.1" fill="#8d8a5c"/><ellipse cx="18.8" cy="12.8" rx="4.1" ry="2.9" fill="#d6d3aa"/></g><g transform="rotate(29 36.6 16.7)"><ellipse cx="36.6" cy="16.7" rx="5.4" ry="4.1" fill="#98946a"/><ellipse cx="36.0" cy="16.2" rx="4.1" ry="2.9" fill="#c3c192"/></g><g transform="rotate(18 35.1 30.5)"><ellipse cx="35.1" cy="30.5" rx="5.4" ry="4.1" fill="#857f55"/><ellipse cx="34.5" cy="30.0" rx="4.1" ry="2.9" fill="#cdca9e"/></g><g transform="rotate(97 7.4 16.9)"><ellipse cx="7.4" cy="16.9" rx="5.4" ry="4.1" fill="#98946a"/><ellipse cx="6.8" cy="16.4" rx="4.1" ry="2.9" fill="#c3c192"/></g><g transform="rotate(13 5.5 23.8)"><ellipse cx="5.5" cy="23.8" rx="5.4" ry="4.1" fill="#8d8a5c"/><ellipse cx="4.9" cy="23.3" rx="4.1" ry="2.9" fill="#d6d3aa"/></g><g transform="rotate(27 40.1 25.1)"><ellipse cx="40.1" cy="25.1" rx="5.4" ry="4.1" fill="#98946a"/><ellipse cx="39.5" cy="24.6" rx="4.1" ry="2.9" fill="#b8b583"/></g><g transform="rotate(108 16.9 28.9)"><ellipse cx="16.9" cy="28.9" rx="5.4" ry="4.1" fill="#98946a"/><ellipse cx="16.3" cy="28.4" rx="4.1" ry="2.9" fill="#c3c192"/></g><g transform="rotate(21 22.2 42.5)"><ellipse cx="22.2" cy="42.5" rx="5.4" ry="4.1" fill="#98946a"/><ellipse cx="21.6" cy="42.0" rx="4.1" ry="2.9" fill="#d6d3aa"/></g><g transform="rotate(86 18.9 23.4)"><ellipse cx="18.9" cy="23.4" rx="5.4" ry="4.1" fill="#98946a"/><ellipse cx="18.3" cy="22.9" rx="4.1" ry="2.9" fill="#c3c192"/></g><g transform="rotate(26 28.1 41.9)"><ellipse cx="28.1" cy="41.9" rx="5.4" ry="4.1" fill="#857f55"/><ellipse cx="27.5" cy="41.4" rx="4.1" ry="2.9" fill="#b8b583"/></g><g transform="rotate(133 21.5 18.2)"><ellipse cx="21.5" cy="18.2" rx="5.4" ry="4.1" fill="#98946a"/><ellipse cx="20.9" cy="17.7" rx="4.1" ry="2.9" fill="#cdca9e"/></g><g transform="rotate(93 9.2 29.4)"><ellipse cx="9.2" cy="29.4" rx="5.4" ry="4.1" fill="#8d8a5c"/><ellipse cx="8.6" cy="28.9" rx="4.1" ry="2.9" fill="#b8b583"/></g><g transform="rotate(26 27.0 37.3)"><ellipse cx="27.0" cy="37.3" rx="5.4" ry="4.1" fill="#857f55"/><ellipse cx="26.4" cy="36.8" rx="4.1" ry="2.9" fill="#c3c192"/></g><g transform="rotate(136 26.9 24.6)"><ellipse cx="26.9" cy="24.6" rx="5.4" ry="4.1" fill="#98946a"/><ellipse cx="26.3" cy="24.1" rx="4.1" ry="2.9" fill="#c3c192"/></g><g transform="rotate(125 34.4 10.6)"><ellipse cx="34.4" cy="10.6" rx="5.4" ry="4.1" fill="#98946a"/><ellipse cx="33.8" cy="10.1" rx="4.1" ry="2.9" fill="#b8b583"/></g><g transform="rotate(163 10.9 11.2)"><ellipse cx="10.9" cy="11.2" rx="5.4" ry="4.1" fill="#98946a"/><ellipse cx="10.3" cy="10.7" rx="4.1" ry="2.9" fill="#cdca9e"/></g><g transform="rotate(96 32.2 24.2)"><ellipse cx="32.2" cy="24.2" rx="5.4" ry="4.1" fill="#857f55"/><ellipse cx="31.6" cy="23.7" rx="4.1" ry="2.9" fill="#b8b583"/></g><g transform="rotate(115 32.9 36.5)"><ellipse cx="32.9" cy="36.5" rx="5.4" ry="4.1" fill="#857f55"/><ellipse cx="32.3" cy="36.0" rx="4.1" ry="2.9" fill="#cdca9e"/></g><g transform="rotate(145 11.4 24.3)"><ellipse cx="11.4" cy="24.3" rx="5.4" ry="4.1" fill="#98946a"/><ellipse cx="10.8" cy="23.8" rx="4.1" ry="2.9" fill="#cdca9e"/></g><g transform="rotate(36 14.9 18.9)"><ellipse cx="14.9" cy="18.9" rx="5.4" ry="4.1" fill="#98946a"/><ellipse cx="14.3" cy="18.4" rx="4.1" ry="2.9" fill="#b8b583"/></g><g transform="rotate(132 19.2 35.9)"><ellipse cx="19.2" cy="35.9" rx="5.4" ry="4.1" fill="#8d8a5c"/><ellipse cx="18.6" cy="35.4" rx="4.1" ry="2.9" fill="#b8b583"/></g><g transform="rotate(85 26.2 11.7)"><ellipse cx="26.2" cy="11.7" rx="5.4" ry="4.1" fill="#8d8a5c"/><ellipse cx="25.6" cy="11.2" rx="4.1" ry="2.9" fill="#b8b583"/></g></svg></div>
<div class="b" style="left:319px;top:1156px;width:16px;height:16px;border-radius:50%;background:#6cb494;border:2px solid #fff"></div>
<div class="t " style="left:354.6px;top:1116.76px;font-size:18px;color:#1f2f43;font-weight:400;letter-spacing:0.138px;-webkit-text-stroke:0.35px #1f2f43;">Кава зелена в зернах - Кенія не обсмажена</div>
<div class="t " style="left:354.6px;top:1143.76px;font-size:18px;color:#7b8692;font-weight:400;letter-spacing:0.180px;-webkit-text-stroke:0.3px #7b8692;">У наявності</div>
<div class="t " style="left:1156px;top:1129.76px;font-size:18px;color:#2f3b4b;font-weight:400;letter-spacing:0.1px;-webkit-text-stroke:0.2px #2f3b4b;">0787454</div>
<div class="t " style="left:1306.5px;top:1129.76px;font-size:18px;color:#2f3b4b;font-weight:400;-webkit-text-stroke:0.2px #2f3b4b;">кг</div>
<div class="t " style="right:986.40px;top:1130.22px;font-size:21px;color:#5f58f5;font-weight:400;letter-spacing:0.1px;">79,2</div>
<div class="t " style="right:791.30px;top:1130.22px;font-size:21px;color:#5f58f5;font-weight:400;letter-spacing:0.1px;">79,2 / 0</div>
<div class="t " style="right:582.95px;top:1129.76px;font-size:18px;color:#2f3b4b;font-weight:400;letter-spacing:-0.45px;-webkit-text-stroke:0.2px #2f3b4b;">1 036,34 UAH</div>
<div class="t " style="left:2026.9px;top:1129.76px;font-size:18px;color:#2f3b4b;font-weight:400;letter-spacing:0.125px;-webkit-text-stroke:0.2px #2f3b4b;">Товар</div>
<div class="t " style="left:2176.6px;top:1129.76px;font-size:18px;color:#2f3b4b;font-weight:400;letter-spacing:0.224px;-webkit-text-stroke:0.2px #2f3b4b;">Кава зелена (сировина)</div>
<div class="b" style="left:201px;top:1209px;width:30px;height:30px;border:2px solid #cdd1d6;border-radius:6px;background:#fff"></div>
<div class="b" style="left:282px;top:1197px;width:48px;height:48px;border-radius:6px;overflow:hidden;"><svg style="left:0;top:0" width="48" height="48"><path d="M0 0 H48 V48 H0 Z" fill="#a88b64"/><rect x="29.9" y="35.6" width="2" height="2" fill="#7a5f3c"/><rect x="1.4" y="22.3" width="2" height="2" fill="#c0a27a"/><rect x="31.2" y="43.2" width="2" height="2" fill="#8c6f48"/><rect x="17.8" y="41.7" width="2" height="2" fill="#b89a70"/><rect x="26.1" y="27.5" width="2" height="2" fill="#8c6f48"/><rect x="35.1" y="19.6" width="2" height="2" fill="#c0a27a"/><rect x="44.0" y="36.8" width="2" height="2" fill="#c0a27a"/><rect x="36.6" y="3.5" width="2" height="2" fill="#7a5f3c"/><rect x="29.6" y="6.1" width="2" height="2" fill="#8c6f48"/><rect x="46.7" y="0.3" width="2" height="2" fill="#c0a27a"/><rect x="46.1" y="8.0" width="2" height="2" fill="#c0a27a"/><rect x="13.9" y="46.2" width="2" height="2" fill="#7a5f3c"/><rect x="42.1" y="30.0" width="2" height="2" fill="#c0a27a"/><rect x="45.2" y="33.2" width="2" height="2" fill="#b89a70"/><rect x="14.3" y="17.3" width="2" height="2" fill="#c0a27a"/><rect x="44.9" y="12.7" width="2" height="2" fill="#9b7d55"/><rect x="14.5" y="28.9" width="2" height="2" fill="#8c6f48"/><rect x="28.6" y="34.0" width="2" height="2" fill="#8c6f48"/><rect x="14.9" y="39.3" width="2" height="2" fill="#b89a70"/><rect x="33.4" y="8.9" width="2" height="2" fill="#b89a70"/><rect x="33.8" y="2.7" width="2" height="2" fill="#8c6f48"/><rect x="45.6" y="17.2" width="2" height="2" fill="#b89a70"/><rect x="0.9" y="37.8" width="2" height="2" fill="#9b7d55"/><rect x="18.1" y="40.4" width="2" height="2" fill="#b89a70"/><rect x="2.2" y="8.7" width="2" height="2" fill="#c0a27a"/><rect x="5.7" y="11.8" width="2" height="2" fill="#b89a70"/><rect x="16.5" y="17.0" width="2" height="2" fill="#7a5f3c"/><rect x="12.0" y="22.2" width="2" height="2" fill="#7a5f3c"/><rect x="35.9" y="38.3" width="2" height="2" fill="#9b7d55"/><rect x="1.8" y="45.4" width="2" height="2" fill="#8c6f48"/><rect x="10.0" y="24.6" width="2" height="2" fill="#9b7d55"/><rect x="44.1" y="16.3" width="2" height="2" fill="#7a5f3c"/><rect x="4.4" y="32.9" width="2" height="2" fill="#9b7d55"/><rect x="8.5" y="3.8" width="2" height="2" fill="#c0a27a"/><rect x="34.6" y="14.8" width="2" height="2" fill="#b89a70"/><rect x="7.8" y="2.3" width="2" height="2" fill="#7a5f3c"/><rect x="25.6" y="19.5" width="2" height="2" fill="#c0a27a"/><rect x="35.5" y="16.5" width="2" height="2" fill="#9b7d55"/><rect x="21.9" y="20.2" width="2" height="2" fill="#8c6f48"/><rect x="47.0" y="30.6" width="2" height="2" fill="#b89a70"/><rect x="16.0" y="9.9" width="2" height="2" fill="#7a5f3c"/><rect x="45.6" y="30.3" width="2" height="2" fill="#b89a70"/><rect x="5.1" y="20.9" width="2" height="2" fill="#c0a27a"/><rect x="2.8" y="20.2" width="2" height="2" fill="#c0a27a"/><rect x="21.8" y="48.0" width="2" height="2" fill="#c0a27a"/><rect x="46.8" y="21.8" width="2" height="2" fill="#b89a70"/><rect x="33.1" y="15.2" width="2" height="2" fill="#9b7d55"/><rect x="14.0" y="19.4" width="2" height="2" fill="#c0a27a"/><rect x="5.4" y="39.5" width="2" height="2" fill="#7a5f3c"/><rect x="46.1" y="30.1" width="2" height="2" fill="#b89a70"/><rect x="41.7" y="8.6" width="2" height="2" fill="#b89a70"/><rect x="13.1" y="37.5" width="2" height="2" fill="#7a5f3c"/><rect x="17.3" y="37.7" width="2" height="2" fill="#9b7d55"/><rect x="33.3" y="31.9" width="2" height="2" fill="#9b7d55"/><rect x="17.4" y="33.8" width="2" height="2" fill="#9b7d55"/><rect x="40.1" y="12.7" width="2" height="2" fill="#9b7d55"/><rect x="45.9" y="16.3" width="2" height="2" fill="#c0a27a"/><rect x="27.9" y="0.6" width="2" height="2" fill="#7a5f3c"/><rect x="37.1" y="15.6" width="2" height="2" fill="#9b7d55"/><rect x="22.2" y="39.2" width="2" height="2" fill="#9b7d55"/><rect x="16.7" y="30.9" width="2" height="2" fill="#b89a70"/><rect x="16.8" y="40.5" width="2" height="2" fill="#b89a70"/><rect x="46.9" y="45.9" width="2" height="2" fill="#7a5f3c"/><rect x="6.8" y="47.0" width="2" height="2" fill="#c0a27a"/><rect x="40.2" y="45.0" width="2" height="2" fill="#b89a70"/><rect x="13.6" y="3.8" width="2" height="2" fill="#b89a70"/><rect x="8.2" y="37.5" width="2" height="2" fill="#7a5f3c"/><rect x="24.8" y="44.9" width="2" height="2" fill="#9b7d55"/><rect x="29.9" y="37.2" width="2" height="2" fill="#9b7d55"/><rect x="34.6" y="1.3" width="2" height="2" fill="#c0a27a"/><rect x="28.1" y="30.0" width="2" height="2" fill="#c0a27a"/><rect x="10.5" y="32.9" width="2" height="2" fill="#8c6f48"/><rect x="47.4" y="47.0" width="2" height="2" fill="#c0a27a"/><rect x="2.6" y="6.4" width="2" height="2" fill="#9b7d55"/><rect x="46.5" y="23.2" width="2" height="2" fill="#7a5f3c"/><rect x="1.7" y="22.3" width="2" height="2" fill="#b89a70"/><rect x="31.8" y="3.5" width="2" height="2" fill="#c0a27a"/><rect x="11.4" y="43.4" width="2" height="2" fill="#8c6f48"/><rect x="16.8" y="45.7" width="2" height="2" fill="#b89a70"/><rect x="41.6" y="33.1" width="2" height="2" fill="#7a5f3c"/><rect x="17.9" y="1.7" width="2" height="2" fill="#7a5f3c"/><rect x="14.5" y="14.2" width="2" height="2" fill="#7a5f3c"/><rect x="16.3" y="27.9" width="2" height="2" fill="#9b7d55"/><rect x="39.3" y="20.1" width="2" height="2" fill="#7a5f3c"/><rect x="30.8" y="17.7" width="2" height="2" fill="#c0a27a"/><rect x="7.5" y="18.4" width="2" height="2" fill="#b89a70"/><rect x="45.9" y="46.5" width="2" height="2" fill="#7a5f3c"/><rect x="4.4" y="39.4" width="2" height="2" fill="#8c6f48"/><rect x="18.3" y="15.7" width="2" height="2" fill="#7a5f3c"/><rect x="25.9" y="15.6" width="2" height="2" fill="#7a5f3c"/><rect x="18.0" y="20.7" width="2" height="2" fill="#c0a27a"/><rect x="23.7" y="23.0" width="2" height="2" fill="#b89a70"/><rect x="18.4" y="41.0" width="2" height="2" fill="#c0a27a"/><rect x="28.6" y="12.5" width="2" height="2" fill="#9b7d55"/><rect x="23.8" y="19.9" width="2" height="2" fill="#9b7d55"/><rect x="45.4" y="14.8" width="2" height="2" fill="#9b7d55"/><rect x="6.9" y="1.1" width="2" height="2" fill="#7a5f3c"/><rect x="46.1" y="11.8" width="2" height="2" fill="#8c6f48"/><rect x="37.5" y="39.7" width="2" height="2" fill="#8c6f48"/><rect x="23.1" y="26.9" width="2" height="2" fill="#c0a27a"/><rect x="44.9" y="37.5" width="2" height="2" fill="#c0a27a"/><rect x="23.5" y="40.5" width="2" height="2" fill="#9b7d55"/><rect x="14.1" y="29.2" width="2" height="2" fill="#b89a70"/><rect x="24.9" y="41.4" width="2" height="2" fill="#8c6f48"/><rect x="0.8" y="6.0" width="2" height="2" fill="#9b7d55"/><rect x="25.6" y="16.1" width="2" height="2" fill="#9b7d55"/><rect x="35.1" y="1.3" width="2" height="2" fill="#9b7d55"/><rect x="17.3" y="35.8" width="2" height="2" fill="#7a5f3c"/><rect x="6.4" y="0.1" width="2" height="2" fill="#7a5f3c"/><rect x="21.9" y="44.0" width="2" height="2" fill="#7a5f3c"/><rect x="9.2" y="20.6" width="2" height="2" fill="#b89a70"/><rect x="28.6" y="33.1" width="2" height="2" fill="#b89a70"/><rect x="41.2" y="40.4" width="2" height="2" fill="#b89a70"/><rect x="18.8" y="40.9" width="2" height="2" fill="#c0a27a"/><rect x="43.1" y="22.3" width="2" height="2" fill="#8c6f48"/><rect x="14.6" y="0.2" width="2" height="2" fill="#b89a70"/><rect x="27.9" y="31.1" width="2" height="2" fill="#b89a70"/><rect x="43.7" y="6.8" width="2" height="2" fill="#b89a70"/><rect x="33.4" y="42.7" width="2" height="2" fill="#9b7d55"/><rect x="25.8" y="20.4" width="2" height="2" fill="#7a5f3c"/><rect x="39.0" y="3.3" width="2" height="2" fill="#c0a27a"/><rect x="12.8" y="4.1" width="2" height="2" fill="#8c6f48"/><rect x="31.9" y="1.2" width="2" height="2" fill="#b89a70"/><rect x="47.0" y="47.9" width="2" height="2" fill="#b89a70"/><rect x="2.3" y="40.4" width="2" height="2" fill="#c0a27a"/><rect x="29.5" y="39.6" width="2" height="2" fill="#8c6f48"/><rect x="34.2" y="6.5" width="2" height="2" fill="#9b7d55"/><rect x="33.9" y="21.0" width="2" height="2" fill="#c0a27a"/><rect x="29.3" y="19.9" width="2" height="2" fill="#c0a27a"/><rect x="3.2" y="10.2" width="2" height="2" fill="#7a5f3c"/><rect x="5.2" y="18.2" width="2" height="2" fill="#8c6f48"/><rect x="13.4" y="27.4" width="2" height="2" fill="#8c6f48"/><rect x="35.6" y="42.2" width="2" height="2" fill="#c0a27a"/><rect x="0.5" y="4.4" width="2" height="2" fill="#7a5f3c"/><rect x="23.5" y="17.0" width="2" height="2" fill="#9b7d55"/><rect x="43.9" y="6.6" width="2" height="2" fill="#9b7d55"/><rect x="7.3" y="30.3" width="2" height="2" fill="#7a5f3c"/><rect x="13.9" y="45.2" width="2" height="2" fill="#7a5f3c"/><rect x="29.8" y="12.6" width="2" height="2" fill="#7a5f3c"/><rect x="11.3" y="40.0" width="2" height="2" fill="#9b7d55"/><path d="M0 27 Q14 34 31 48 H0 Z" fill="#d8d6d6"/></svg></div>
<div class="b" style="left:319px;top:1240px;width:16px;height:16px;border-radius:50%;background:#6cb494;border:2px solid #fff"></div>
<div class="t " style="left:354.6px;top:1200.76px;font-size:18px;color:#1f2f43;font-weight:400;letter-spacing:0.103px;-webkit-text-stroke:0.35px #1f2f43;">Кава зелена, мелена не обсмажена</div>
<div class="t " style="left:354.6px;top:1227.76px;font-size:18px;color:#7b8692;font-weight:400;letter-spacing:0.180px;-webkit-text-stroke:0.3px #7b8692;">У наявності</div>
<div class="t " style="left:1156px;top:1213.76px;font-size:18px;color:#2f3b4b;font-weight:400;letter-spacing:0.1px;-webkit-text-stroke:0.2px #2f3b4b;">3687789</div>
<div class="t " style="left:1306.5px;top:1213.76px;font-size:18px;color:#2f3b4b;font-weight:400;-webkit-text-stroke:0.2px #2f3b4b;">кг</div>
<div class="t " style="right:986.40px;top:1214.22px;font-size:21px;color:#5f58f5;font-weight:400;letter-spacing:0.1px;">36</div>
<div class="t " style="right:791.30px;top:1214.22px;font-size:21px;color:#5f58f5;font-weight:400;letter-spacing:0.1px;">36 / 0</div>
<div class="t " style="right:582.95px;top:1213.76px;font-size:18px;color:#2f3b4b;font-weight:400;letter-spacing:-0.45px;-webkit-text-stroke:0.2px #2f3b4b;">563,10 UAH</div>
<div class="t " style="left:2026.9px;top:1213.76px;font-size:18px;color:#2f3b4b;font-weight:400;letter-spacing:0.125px;-webkit-text-stroke:0.2px #2f3b4b;">Товар</div>
<div class="t " style="left:2176.6px;top:1213.76px;font-size:18px;color:#2f3b4b;font-weight:400;letter-spacing:0.224px;-webkit-text-stroke:0.2px #2f3b4b;">Кава зелена (сировина)</div>
<svg style="left:0;top:0" width="2559" height="1301"><circle cx="2479" cy="375.2" r="2.9" fill="#65707c"/><circle cx="2479" cy="384.0" r="2.9" fill="#65707c"/><circle cx="2479" cy="392.9" r="2.9" fill="#65707c"/><path d="M206.9 467.8 L213.5 473.4 L224.4 459.9" stroke="#fff" stroke-width="1.6" fill="none"/><circle cx="2479" cy="459.2" r="2.9" fill="#65707c"/><circle cx="2479" cy="468.0" r="2.9" fill="#65707c"/><circle cx="2479" cy="476.9" r="2.9" fill="#65707c"/><path d="M206.9 551.8 L213.5 557.4 L224.4 543.9" stroke="#fff" stroke-width="1.6" fill="none"/><circle cx="2479" cy="543.2" r="2.9" fill="#65707c"/><circle cx="2479" cy="552.0" r="2.9" fill="#65707c"/><circle cx="2479" cy="560.9" r="2.9" fill="#65707c"/><path d="M206.9 635.8 L213.5 641.4 L224.4 627.9" stroke="#fff" stroke-width="1.6" fill="none"/><circle cx="2479" cy="627.2" r="2.9" fill="#65707c"/><circle cx="2479" cy="636.0" r="2.9" fill="#65707c"/><circle cx="2479" cy="644.9" r="2.9" fill="#65707c"/><circle cx="2479" cy="711.2" r="2.9" fill="#65707c"/><circle cx="2479" cy="720.0" r="2.9" fill="#65707c"/><circle cx="2479" cy="728.9" r="2.9" fill="#65707c"/><circle cx="2479" cy="795.2" r="2.9" fill="#65707c"/><circle cx="2479" cy="804.0" r="2.9" fill="#65707c"/><circle cx="2479" cy="812.9" r="2.9" fill="#65707c"/><circle cx="2479" cy="879.2" r="2.9" fill="#65707c"/><circle cx="2479" cy="888.0" r="2.9" fill="#65707c"/><circle cx="2479" cy="896.9" r="2.9" fill="#65707c"/><circle cx="2479" cy="963.2" r="2.9" fill="#65707c"/><circle cx="2479" cy="972.0" r="2.9" fill="#65707c"/><circle cx="2479" cy="980.9" r="2.9" fill="#65707c"/><circle cx="2479" cy="1047.2" r="2.9" fill="#65707c"/><circle cx="2479" cy="1056.0" r="2.9" fill="#65707c"/><circle cx="2479" cy="1064.9" r="2.9" fill="#65707c"/><circle cx="2479" cy="1131.2" r="2.9" fill="#65707c"/><circle cx="2479" cy="1140.0" r="2.9" fill="#65707c"/><circle cx="2479" cy="1148.9" r="2.9" fill="#65707c"/><circle cx="2479" cy="1215.2" r="2.9" fill="#65707c"/><circle cx="2479" cy="1224.0" r="2.9" fill="#65707c"/><circle cx="2479" cy="1232.9" r="2.9" fill="#65707c"/></svg>
<div class="b" style="left:2539px;top:345px;width:9px;height:506px;background:#cbced5;border-radius:4.5px"></div>
<div class="t " style="left:2494px;top:1287.69px;font-size:11px;color:#5a5f66;font-weight:400;letter-spacing:0.1px;">1.84.40</div>
<div class="b" style="left:173px;top:425px;width:88px;height:256px;border:3px solid #0000ff"></div>
<svg style="left:0;top:0" width="2559" height="1301"><path d="M111.3 90.8 L165.51 50.01" stroke="#0000ff" stroke-width="3" stroke-linecap="round" fill="none"/><path d="M175.5 42.5 L167.04 55.37 L165.91 49.71 L160.79 47.06 Z" fill="#0000ff"/><path d="M2011.1 248.7 L2164.87 124.55" stroke="#0000ff" stroke-width="3" stroke-linecap="round" fill="none"/><path d="M2174.6 116.7 L2166.58 129.85 L2165.26 124.24 L2160.05 121.76 Z" fill="#0000ff"/></svg>
<div class="b" style="left:0;top:1px;width:2558px;height:1300px;border:3px solid #bfbfbf;"></div>
</body></html>
